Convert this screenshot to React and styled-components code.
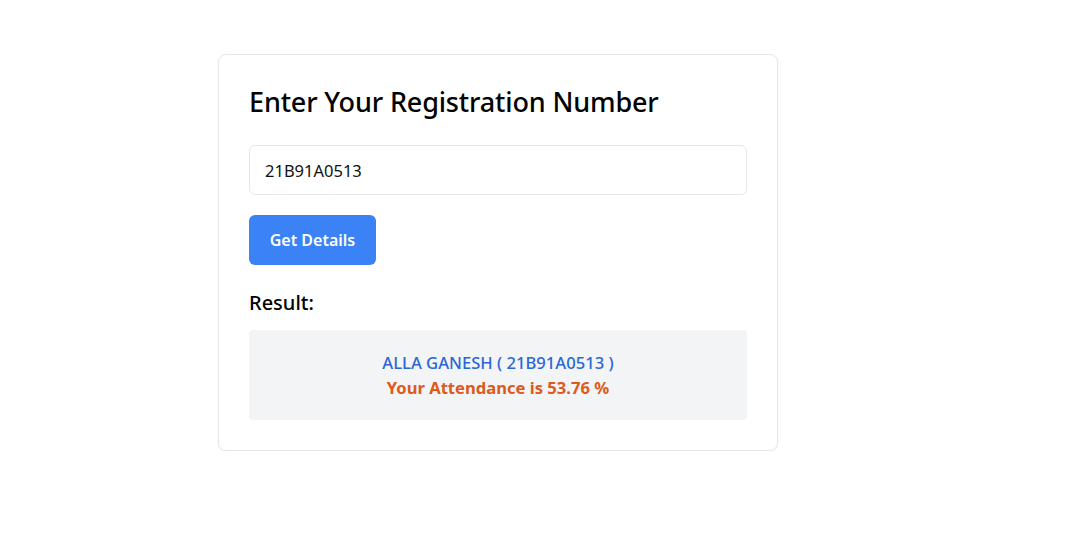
import React, { useState } from "react";
import styled, { createGlobalStyle } from "styled-components";

const GlobalStyle = createGlobalStyle`
  * { box-sizing: border-box; }
  body {
    margin: 0;
    background: #ffffff;
    font-family: "Noto Sans", "Open Sans", sans-serif;
    color: #000;
  }
`;

const Page = styled.div`
  padding: 54px 0 0 218px;
`;

const Card = styled.div`
  width: 560px;
  padding: 29px 30px 30px;
  border: 1px solid #e5e7eb;
  border-radius: 8px;
  background: #fff;
  box-shadow: 0 1px 2px rgba(0, 0, 0, 0.05);
`;

const Title = styled.h1`
  margin: 0 0 25px;
  font-size: 27px;
  line-height: 36px;
  font-weight: 500;
  letter-spacing: -0.15px;
`;

const Input = styled.input`
  display: block;
  width: 100%;
  height: 50px;
  padding: 0 15px;
  border: 1px solid #e5e7eb;
  border-radius: 6px;
  font-family: inherit;
  font-size: 16.5px;
  color: #111;
  outline: none;
`;

const Button = styled.button`
  display: block;
  margin-top: 20px;
  width: 127px;
  height: 50px;
  border: none;
  border-radius: 6px;
  background: #3b82f6;
  color: #fff;
  font-family: inherit;
  font-size: 16px;
  font-weight: 600;
  cursor: pointer;
`;

const Subtitle = styled.h2`
  margin: 24px 0 13px;
  font-size: 20px;
  line-height: 28px;
  font-weight: 500;
`;

const ResultBox = styled.div`
  height: 90px;
  border-radius: 4px;
  background: #f3f4f6;
  display: flex;
  flex-direction: column;
  align-items: center;
  justify-content: center;
  gap: 1px;
`;

const Line = styled.div`
  font-size: 16.6px;
  line-height: 24px;
  font-weight: ${(p) => p.$weight};
  color: ${(p) => p.$color};
`;

export default function App() {
  const [reg, setReg] = useState("21B91A0513");
  return (
    <>
      <GlobalStyle />
      <Page>
        <Card>
          <Title>Enter Your Registration Number</Title>
          <Input value={reg} onChange={(e) => setReg(e.target.value)} />
          <Button>Get Details</Button>
          <Subtitle>Result:</Subtitle>
          <ResultBox>
            <Line $color="#2b66d6" $weight={500}>ALLA GANESH ( 21B91A0513 )</Line>
            <Line $color="#dc5a1c" $weight={700}>Your Attendance is 53.76 %</Line>
          </ResultBox>
        </Card>
      </Page>
    </>
  );
}
